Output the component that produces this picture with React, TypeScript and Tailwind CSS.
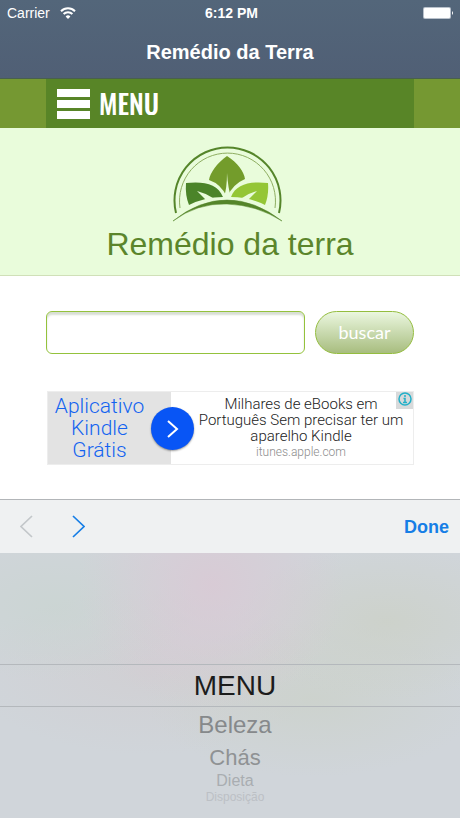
import { useState } from "react";

const options = [
  { label: "MENU", row: "h-[43px] text-[28px] text-[#1c1c1c] border-y border-[#b4b8bc]" },
  { label: "Beleza", row: "h-9 text-[24px] text-[#86898b]" },
  { label: "Chás", row: "h-[29px] text-[22px] text-[#8f9294]" },
  { label: "Dieta", row: "h-[18px] text-[16px] text-[#a9adb1]" },
  { label: "Disposição", row: "h-[14px] text-[12px] text-[#bcc0c5]" },
];

function StatusBar() {
  return (
    <div className="grid h-[26px] grid-cols-3 items-center pr-1 pl-[7px] text-[14px] text-white">
      <span className="flex items-center gap-[10px]">
        Carrier
        <svg width="16" height="12" viewBox="0 0 16 12" fill="none" stroke="white" strokeWidth="2">
          <path d="M1 4.2a10 10 0 0 1 14 0" />
          <path d="M3.6 7a6.2 6.2 0 0 1 8.8 0" />
          <path d="M8 12 5.6 9.4a3.4 3.4 0 0 1 4.8 0Z" fill="white" stroke="none" />
        </svg>
      </span>
      <span className="text-center font-bold">6:12 PM</span>
      <svg className="justify-self-end" width="34" height="14" viewBox="0 0 34 14">
        <rect x="1" y="1" width="28" height="12" rx="2" fill="#b9c1cb" />
        <rect x="2" y="2" width="26" height="10" rx="1" fill="white" />
        <path d="M30 5q2 2 0 4Z" fill="white" />
      </svg>
    </div>
  );
}

function Logo() {
  return (
    <svg width="116" height="80" viewBox="172 144 116 80" fill="none" aria-hidden="true">
      <path d="M176 213A53 53 0 1 1 279 213" stroke="#55852a" strokeWidth="2" />
      <path d="M180 208A48 48 0 1 1 275 208" stroke="#8fae62" strokeWidth="1" />
      <path d="M227 156C217 163 210 173 209 180Q221 184 227 197Q233 184 245 179C244 172 238 163 227 156Z" fill="#739c2b" />
      <path d="M186 183C204 181 218 184 223 197Q205 197 189 205Q185 195 186 183Z" fill="#4b8429" />
      <path d="M268 183C250 181 236 184 231 197Q249 197 265 205Q269 195 268 183Z" fill="#94c636" />
      <path d="M224 197Q227 188 227 173Q228 188 231 197Z" fill="#e9fcdb" />
      <path d="M213 198Q205 193 197 191Q201 195 206 200ZM242 198Q249 193 257 191Q253 195 248 200Z" fill="#e9fcdb" />
      <path d="M173 221Q199 200 227 200T282 221Q257 205 227 204T173 221Z" fill="#55852a" stroke="#55852a" strokeWidth="0.5" />
    </svg>
  );
}

function SiteHeader() {
  return (
    <>
      <nav className="bg-[#759832] px-[46px]">
        <button className="flex h-[49px] w-full items-center gap-[9px] bg-[#588527] pl-[11px] text-white">
          <svg width="33" height="30" viewBox="0 0 33 30" fill="currentColor">
            <rect width="33" height="8" />
            <rect y="11" width="33" height="8" />
            <rect y="22" width="33" height="8" />
          </svg>
          <span className="pb-0.5 font-['Oswald','Roboto_Condensed','Open_Sans_Condensed','Roboto',sans-serif] text-[27px] leading-8 font-medium">
            MENU
          </span>
        </button>
      </nav>
      <div className="flex h-[148px] flex-col items-center border-b border-[#d0e0b8] bg-[#e9fcdb] pt-4">
        <Logo />
        <h2 className="text-[32px] leading-10 text-[#5b852b]">Remédio da terra</h2>
      </div>
    </>
  );
}

function Search() {
  return (
    <form className="flex gap-[10px] px-[46px] pt-[35px]" onSubmit={(e) => e.preventDefault()}>
      <input
        type="text"
        aria-label="buscar"
        className="h-[43px] min-w-0 flex-1 rounded-md border border-[#94c23c] bg-white px-3 text-lg shadow-[inset_0_3px_2px_#d9dfd5] outline-none"
      />
      <button className="h-[43px] w-[99px] rounded-full border border-[#94bd3f] bg-linear-to-b from-[#ebf7df] to-[#a8bd7f] font-['Lato',sans-serif] text-[18px] text-white">
        buscar
      </button>
    </form>
  );
}

function AdBanner() {
  return (
    <a
      href="#"
      className="relative mr-[46px] ml-[47px] mt-[37px] flex h-[74px] border border-[#ededed] bg-white text-center font-['Roboto',sans-serif] font-light"
    >
      <span className="flex w-[123px] items-center bg-[#e3e3e3] pr-[20px] text-[21px] leading-[22px] text-[#1463f0]">
        <span className="w-full">Aplicativo Kindle Grátis</span>
      </span>
      <span className="flex flex-1 flex-col pt-1 pr-2 pl-[26px] text-[15px] leading-4 text-[#222]">
        <span>Milhares de eBooks em Português Sem precisar ter um aparelho Kindle</span>
        <span className="text-[12px] text-[#8c8c8c]">itunes.apple.com</span>
      </span>
      <span className="absolute top-[15px] left-[103px] flex size-[43px] items-center justify-center rounded-full bg-[#0855f5] shadow-[0_1px_2px_#0006]">
        <svg width="14" height="20" viewBox="0 0 14 20" fill="none" stroke="white" strokeWidth="2">
          <path d="m2 2 9 8-9 8" />
        </svg>
      </span>
      <svg className="absolute top-0 right-0 bg-[#d8dadb]" width="17" height="17" viewBox="0 0 17 17" fill="none">
        <circle cx="9" cy="7" r="6" stroke="#22b0c8" strokeWidth="1.5" />
        <path d="M9 3v2M7.5 6.5H9v4M7 10.5h4" stroke="#22b0c8" strokeWidth="1.5" />
      </svg>
    </a>
  );
}

function Picker() {
  const [selected, setSelected] = useState("MENU");

  return (
    <section>
      <div className="flex h-[54px] items-center border-t border-[#b2b5b8] bg-[#eff1f2] pr-[11px] pl-5 text-[#167ee6]">
        <button aria-label="Previous" className="text-[#c3c7ca]">
          <svg width="13" height="23" viewBox="0 0 13 23" fill="none" stroke="currentColor" strokeWidth="1.7">
            <path d="M12 1 1 11.5 12 22" />
          </svg>
        </button>
        <button aria-label="Next" className="ml-[39px]">
          <svg width="13" height="23" viewBox="0 0 13 23" fill="none" stroke="currentColor" strokeWidth="1.7">
            <path d="m1 1 11 10.5L1 22" />
          </svg>
        </button>
        <button className="ml-auto text-lg font-bold">Done</button>
      </div>
      <div
        role="listbox"
        aria-label="Menu"
        className="bg-[#d0d5da] bg-[radial-gradient(ellipse_at_46%_12%,#dcc6d3aa,transparent_38%),radial-gradient(ellipse_at_84%_26%,#cbd0c3aa,transparent_28%),radial-gradient(ellipse_at_68%_55%,#cbd1c7aa,transparent_38%),radial-gradient(ellipse_at_12%_20%,#c8d5cf99,transparent_25%),radial-gradient(ellipse_at_32%_45%,#d1cdd0aa,transparent_40%)] pt-[111px] pb-[14px]"
      >
        {options.map((o) => (
          <button
            key={o.label}
            role="option"
            aria-selected={selected === o.label}
            onClick={() => setSelected(o.label)}
            className={`flex w-full items-center justify-center pl-[10px] leading-none ${o.row}`}
          >
            {o.label}
          </button>
        ))}
      </div>
    </section>
  );
}

export default function App() {
  return (
    <div className="flex min-h-screen flex-col bg-white font-['Liberation_Sans',sans-serif]">
      <header className="h-[79px] border-b border-[#49604d] bg-linear-to-b from-[#53667a] to-[#505f75]">
        <StatusBar />
        <h1 className="text-center text-[20px] leading-[52px] font-bold text-white">Remédio da Terra</h1>
      </header>
      <main className="flex-1 pb-[34px]">
        <SiteHeader />
        <Search />
        <AdBanner />
      </main>
      <Picker />
    </div>
  );
}
